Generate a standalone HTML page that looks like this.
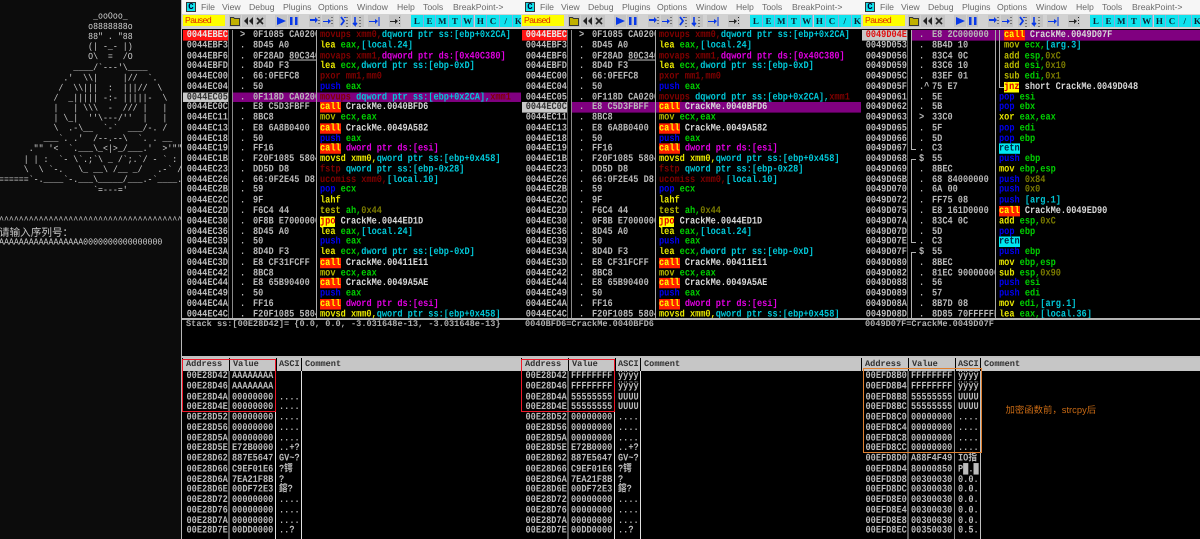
<!DOCTYPE html>
<html><head><meta charset="utf-8"><style>
html,body{margin:0;padding:0;background:#0c0c0c;width:1200px;height:539px;overflow:hidden;text-rendering:geometricPrecision}
*{box-sizing:border-box}
#con{position:absolute;left:0;top:0;width:181px;height:539px;background:#0c0c0c;overflow:hidden;color:#d0d0d0;font-family:"Liberation Mono",monospace;filter:blur(.2px)}
#con pre{position:absolute;left:-1px;margin:0;font:8.25px/9.107px "Liberation Mono",monospace;transform:scaleY(1.12);transform-origin:0 0;white-space:pre}
#cn{position:absolute;left:-1px;top:226px;font:10.6px/14px "Liberation Sans","Noto Sans CJK SC",sans-serif;color:#c8c8c8}
.pane{position:absolute;top:0;width:340px;height:539px;background:#000;overflow:hidden;font-family:"Liberation Mono",monospace;font-weight:bold;font-size:8.6px;filter:blur(.25px)}
.pane>div{position:absolute}
.menu{left:0;top:0;width:340px;height:14px;background:#f6f6f6}
.menu span{position:absolute;top:2px;font:normal 8.7px/11px "Liberation Sans",sans-serif;color:#6a6a6a}
.logo{left:4px;top:2px;width:10px;height:10px;background:#10e0e8;border:1px solid #333;color:#003;font:bold 9px/8px "Liberation Mono",monospace;text-align:center}
.tb{left:0;top:14px;width:340px;height:15px;background:#d2d2d2}
.pz{left:1px;top:15px;width:42px;height:11px;background:#ffff00;color:#e02000;font:normal 8.6px/11px "Liberation Sans",sans-serif;letter-spacing:-.5px;padding-left:2px}
.ltr{top:15px;width:12.7px;height:12px;background:#10e4ee;border-right:1px solid #8ad;color:#102030;font:bold 9px/12px "Liberation Serif",serif;text-align:center}
.ic{left:0;top:14px}
.rows{left:0;top:30px;width:340px;transform:scaleY(1.18);transform-origin:0 0}
.rows p{position:relative;margin:0;height:8.78px;line-height:8.78px;white-space:pre;color:#b8b8b8}
.rows b,.rows i,.rows u,.rows s{position:absolute;top:0;height:8.78px;font-style:normal;font-weight:bold;text-decoration:none;overflow:hidden}
.rows b{left:1px;width:45px;padding-left:3.7px;color:#bcbcbc}
.rows i{left:58px}
.rows u{left:71px;width:63px}
.rows s{left:138px;width:201px}
.rows u u{position:static;text-decoration:underline}
.pp{background:linear-gradient(90deg,transparent 51px,#800080 51px)}
.rd b{background:#ff1414;color:#e8e8e8}
.gr b{background:#c8c8c8;color:#303030}
.gr3 b{background:#c8c8c8;color:#e01010}
.in s{padding-left:5px}
.r{color:#800000}.c{color:#00c8d8}.m{color:#e000e0}.y{color:#e8e800}.g{color:#00d000}.l{color:#0000f0}.o{color:#7a7a00}.w{color:#d8d8d8}.t{color:#b8b800}
.ca,.jp,.rt{display:inline-block;height:8.78px;vertical-align:top}
.ca{background:#ff2000;color:#ffff00}.jp{background:#ffff00;color:#e00000}.rt{background:#00e8f0;color:#002040}
.vl{width:1px}
.hd{top:358px;height:13px;background:#c6c6c6;color:#303030;font:bold 8.6px/13px "Liberation Mono",monospace;padding-left:3px}
.dump{left:0;top:371px;width:340px;transform:scaleY(1.18);transform-origin:0 0}
.dump p{position:relative;margin:0;height:8.77px;line-height:8.77px;white-space:pre;color:#bcbcbc}
.dump b,.dump u,.dump s{position:absolute;top:0;font-weight:bold;text-decoration:none}
.dump b{left:4.5px}.dump u{left:50px}.dump s{left:97px;font-family:"Liberation Mono","Noto Sans CJK SC",monospace}
.info{top:319px;left:4px;width:330px;color:#b0b0b0;line-height:10px}
#note{position:absolute;left:1005.5px;top:403px;font:9.4px/14px "Liberation Sans","Noto Sans CJK SC",sans-serif;color:#c86a14;white-space:pre}
</style></head><body>
<svg width="0" height="0" style="position:absolute"><defs>
<symbol id="tools" viewBox="0 0 230 15">
<rect x="47" y="1" width="12" height="12" fill="#c0c0c0"/><path d="M48.500 3.500h3l1 1h5v7h-9z" fill="#c0b000" stroke="#333" stroke-width="1"/>
<rect x="60" y="1" width="12" height="12" fill="#c4c4c4"/><path d="M66 3v8l-4-4zM71 3v8l-4-4z" fill="#222"/>
<rect x="73" y="1" width="11" height="12" fill="#c4c4c4"/><path d="M75 4l6 6M81 4l-6 6" stroke="#222" stroke-width="1.6"/>
<rect x="93" y="1" width="12" height="12" fill="#c4c4c4"/><path d="M95 3l9 4-9 4z" fill="#0838e8"/>
<rect x="106" y="1" width="11" height="12" fill="#c4c4c4"/><path d="M108 3h2.500v8H108zM113 3h2.500v8H113z" fill="#0838e8"/>
<rect x="127" y="1" width="12" height="12" fill="#c4c4c4"/><path d="M128 5h5v-2l3 3-3 3V7h-5z" fill="#0838e8"/><path d="M137 3v1M137 6v1M137 9v1" stroke="#222"/>
<rect x="140" y="1" width="12" height="12" fill="#c4c4c4"/><path d="M141 7h5V5l3 2-3 3V8h-5z" fill="#0838e8"/><path d="M150 3v1M150 6v1M150 9v1" stroke="#222"/>
<rect x="157" y="1" width="12" height="12" fill="#c4c4c4"/><path d="M159 3l3 4-3 4M163 3v1" stroke="#0838e8" stroke-width="1.800" fill="none"/><path d="M165 3v1M165 6v1M165 9v1M165 12v1" stroke="#222"/>
<rect x="170" y="1" width="12" height="12" fill="#c4c4c4"/><path d="M173 3v8l-2-2M173 11l2-2" stroke="#0838e8" stroke-width="1.600" fill="none"/><path d="M178 3v1M178 6v1M178 9v1M178 12v1" stroke="#222"/>
<rect x="186" y="1" width="12" height="12" fill="#c4c4c4"/><path d="M187 7h6V5l3 2-3 3V8h-6z" fill="#0838e8"/><path d="M197 3v9" stroke="#0838e8"/>
<rect x="207" y="1" width="12" height="12" fill="#c4c4c4"/><path d="M208 7h5V5l3 2-3 3V8h-5z" fill="#222"/><path d="M217.500 3v1M217.500 6v1M217.500 9v1" stroke="#222"/>
</symbol></defs></svg>

<div id="con">
<pre style="top:12px">                   _ooOoo_
                  o8888888o
                  88" . "88
                  (| -_- |)
                  O\  =  /O
               ____/`---'\____
             .'  \\|     |//  `.
            /  \\|||  :  |||//  \
           /  _||||| -:- |||||-  \
           |   | \\\  -  /// |   |
           | \_|  ''\---/''  |   |
           \  .-\__  `-`  ___/-. /
         ___`. .'  /--.--\  `. . __
      ."" '&lt;  `.___\_&lt;|&gt;_/___.'  &gt;'"".
     | | :  `- \`.;`\ _ /`;.`/ - ` : | |
     \  \ `-.   \_ __\ /__ _/   .-` /  /
======`-.____`-.___\_____/___.-`____.-'======
                   `=---='


^^^^^^^^^^^^^^^^^^^^^^^^^^^^^^^^^^^^^^^^^^^^^^</pre>
<div id="cn">请输入序列号：</div>
<pre style="top:238px">AAAAAAAAAAAAAAAAA0000000000000000</pre>
</div>
<div style="position:absolute;left:181px;top:0;width:2px;height:539px;background:#b8b8b8"></div>

<!-- PANE 1 -->
<div class="pane" style="left:182px;width:339px">
<div class="rows">
<p class="rd"><b>0044EBEC</b><i>&gt;</i><u>0F1085 CA020000</u><s><span class=r>movups xmm0,</span><span class=c>dqword ptr ss:[ebp+0x2CA]</span></s></p>
<p><b>0044EBF3</b><i>.</i><u>8D45 A0</u><s><span class=y>lea</span> <span class=g>eax,</span><span class=c>[local.24]</span></s></p>
<p><b>0044EBF6</b><i>.</i><u>0F28AD <u>80C34000</u></u><s><span class=r>movaps xmm1,</span><span class=m>dqword ptr ds:[0x40C380]</span></s></p>
<p><b>0044EBFD</b><i>.</i><u>8D4D F3</u><s><span class=y>lea</span> <span class=g>ecx,</span><span class=c>dword ptr ss:[ebp-0xD]</span></s></p>
<p><b>0044EC00</b><i>.</i><u>66:0FEFC8</u><s><span class=r>pxor mm1,mm0</span></s></p>
<p><b>0044EC04</b><i>.</i><u>50</u><s><span class=l>push</span> <span class=g>eax</span></s></p>
<p class="gr pp"><b>0044EC05</b><i>.</i><u>0F118D CA020000</u><s><span class=r>movups</span> <span class=c>dqword ptr ss:[ebp+0x2CA],</span><span class=r>xmm1</span></s></p>
<p><b>0044EC0C</b><i>.</i><u>E8 C5D3FBFF</u><s><span class=ca>call</span> <span class=w>CrackMe.0040BFD6</span></s></p>
<p><b>0044EC11</b><i>.</i><u>8BC8</u><s><span class=t>mov</span> <span class=g>ecx,eax</span></s></p>
<p><b>0044EC13</b><i>.</i><u>E8 6A8B0400</u><s><span class=ca>call</span> <span class=w>CrackMe.0049A582</span></s></p>
<p><b>0044EC18</b><i>.</i><u>50</u><s><span class=l>push</span> <span class=g>eax</span></s></p>
<p><b>0044EC19</b><i>.</i><u>FF16</u><s><span class=ca>call</span> <span class=m>dword ptr ds:[esi]</span></s></p>
<p><b>0044EC1B</b><i>.</i><u>F20F1085 58040000</u><s><span class=y>movsd xmm0,</span><span class=c>qword ptr ss:[ebp+0x458]</span></s></p>
<p><b>0044EC23</b><i>.</i><u>DD5D D8</u><s><span class=r>fstp</span> <span class=c>qword ptr ss:[ebp-0x28]</span></s></p>
<p><b>0044EC26</b><i>.</i><u>66:0F2E45 D8</u><s><span class=r>ucomiss xmm0,</span><span class=c>[local.10]</span></s></p>
<p><b>0044EC2B</b><i>.</i><u>59</u><s><span class=l>pop</span> <span class=g>ecx</span></s></p>
<p><b>0044EC2C</b><i>.</i><u>9F</u><s><span class=y>lahf</span></s></p>
<p><b>0044EC2D</b><i>.</i><u>F6C4 44</u><s><span class=t>test</span> <span class=g>ah,</span><span class=o>0x44</span></s></p>
<p><b>0044EC30</b><i>.</i><u>0F8B E7000000</u><s><span class=jp>jpo</span> <span class=w>CrackMe.0044ED1D</span></s></p>
<p><b>0044EC36</b><i>.</i><u>8D45 A0</u><s><span class=y>lea</span> <span class=g>eax,</span><span class=c>[local.24]</span></s></p>
<p><b>0044EC39</b><i>.</i><u>50</u><s><span class=l>push</span> <span class=g>eax</span></s></p>
<p><b>0044EC3A</b><i>.</i><u>8D4D F3</u><s><span class=y>lea</span> <span class=g>ecx,</span><span class=c>dword ptr ss:[ebp-0xD]</span></s></p>
<p><b>0044EC3D</b><i>.</i><u>E8 CF31FCFF</u><s><span class=ca>call</span> <span class=w>CrackMe.00411E11</span></s></p>
<p><b>0044EC42</b><i>.</i><u>8BC8</u><s><span class=t>mov</span> <span class=g>ecx,eax</span></s></p>
<p><b>0044EC44</b><i>.</i><u>E8 65B90400</u><s><span class=ca>call</span> <span class=w>CrackMe.0049A5AE</span></s></p>
<p><b>0044EC49</b><i>.</i><u>50</u><s><span class=l>push</span> <span class=g>eax</span></s></p>
<p><b>0044EC4A</b><i>.</i><u>FF16</u><s><span class=ca>call</span> <span class=m>dword ptr ds:[esi]</span></s></p>
<p><b>0044EC4C</b><i>.</i><u>F20F1085 58040000</u><s><span class=y>movsd xmm0,</span><span class=c>qword ptr ss:[ebp+0x458]</span></s></p>
</div>
<div class="vl" style="left:46px;top:30px;height:288px;background:#5a5a5a"></div>
<div class="vl" style="left:50px;top:30px;height:288px;background:#8a8a8a"></div>
<div class="vl" style="left:134px;top:30px;height:288px;background:#a8a8a8"></div>
<div style="top:318px;left:0;width:339px;height:2px;background:#b4b4b4"></div>
<div class="info" style="top:319px">Stack ss:[00E28D42]= {0.0, 0.0, -3.031648e-13, -3.031648e-13}</div>
<div style="left:0;top:356px;width:339px;height:2px;background:#c0c0c0"></div>
<div class="hd" style="left:1px;width:46px">Address</div>
<div class="hd" style="left:48px;width:46px">Value</div>
<div class="hd" style="left:95px;width:24px;padding-left:2px">ASCI</div>
<div class="hd" style="left:120px;width:219px;padding-left:3px">Comment</div>
<div class="dump">
<p><b>00E28D42</b><u>AAAAAAAA</u></p>
<p><b>00E28D46</b><u>AAAAAAAA</u></p>
<p><b>00E28D4A</b><u>00000000</u><s>....</s></p>
<p><b>00E28D4E</b><u>00000000</u><s>....</s></p>
<p><b>00E28D52</b><u>00000000</u><s>....</s></p>
<p><b>00E28D56</b><u>00000000</u><s>....</s></p>
<p><b>00E28D5A</b><u>00000000</u><s>....</s></p>
<p><b>00E28D5E</b><u>E72B0000</u><s>..+?</s></p>
<p><b>00E28D62</b><u>887E5647</u><s>GV~?</s></p>
<p><b>00E28D66</b><u>C9EF01E6</u><s>?锷</s></p>
<p><b>00E28D6A</b><u>7EA21F8B</u><s>?</s></p>
<p><b>00E28D6E</b><u>00DF72E3</u><s>鎔?</s></p>
<p><b>00E28D72</b><u>00000000</u><s>....</s></p>
<p><b>00E28D76</b><u>00000000</u><s>....</s></p>
<p><b>00E28D7A</b><u>00000000</u><s>....</s></p>
<p><b>00E28D7E</b><u>00DD0000</u><s>..?</s></p>
</div>
<div style="left:46px;top:371px;width:2px;height:168px;background:#5a5a5a"></div>
<div class="vl" style="left:93px;top:371px;height:168px;background:#e0e0e0"></div>
<div class="vl" style="left:119px;top:371px;height:168px;background:#e0e0e0"></div>
<div style="left:0;top:359px;width:94px;height:53px;border:1px solid #f01828"></div>
<div class="menu"><div class="logo" style="position:absolute">C</div><span style="left:19px">File</span><span style="left:40px">View</span><span style="left:67px">Debug</span><span style="left:101px">Plugins</span><span style="left:136px">Options</span><span style="left:175px">Window</span><span style="left:215px">Help</span><span style="left:241px">Tools</span><span style="left:271px">BreakPoint-&gt;</span></div>
<div class="tb"></div><div class="pz">Paused</div>
<svg class="ic" width="230" height="15" style="position:absolute"><use href="#tools"/></svg>
<div class="ltr" style="left:229px">L</div><div class="ltr" style="left:241.700px">E</div><div class="ltr" style="left:254.400px">M</div><div class="ltr" style="left:267.100px">T</div><div class="ltr" style="left:279.800px">W</div><div class="ltr" style="left:292.500px">H</div><div class="ltr" style="left:305.200px">C</div><div class="ltr" style="left:317.900px">/</div><div class="ltr" style="left:330.600px">K</div>
</div>
<div style="position:absolute;left:521px;top:14px;width:1px;height:525px;background:#2f5f90"></div>

<!-- PANE 2 -->
<div class="pane" style="left:521px;width:340px">
<div class="rows">
<p class="rd"><b>0044EBEC</b><i>&gt;</i><u>0F1085 CA020000</u><s><span class=r>movups xmm0,</span><span class=c>dqword ptr ss:[ebp+0x2CA]</span></s></p>
<p><b>0044EBF3</b><i>.</i><u>8D45 A0</u><s><span class=y>lea</span> <span class=g>eax,</span><span class=c>[local.24]</span></s></p>
<p><b>0044EBF6</b><i>.</i><u>0F28AD <u>80C34000</u></u><s><span class=r>movaps xmm1,</span><span class=m>dqword ptr ds:[0x40C380]</span></s></p>
<p><b>0044EBFD</b><i>.</i><u>8D4D F3</u><s><span class=y>lea</span> <span class=g>ecx,</span><span class=c>dword ptr ss:[ebp-0xD]</span></s></p>
<p><b>0044EC00</b><i>.</i><u>66:0FEFC8</u><s><span class=r>pxor mm1,mm0</span></s></p>
<p><b>0044EC04</b><i>.</i><u>50</u><s><span class=l>push</span> <span class=g>eax</span></s></p>
<p><b>0044EC05</b><i>.</i><u>0F118D CA020000</u><s><span class=r>movups</span> <span class=c>dqword ptr ss:[ebp+0x2CA],</span><span class=r>xmm1</span></s></p>
<p class="gr pp"><b>0044EC0C</b><i>.</i><u>E8 C5D3FBFF</u><s><span class=ca>call</span> <span class=w>CrackMe.0040BFD6</span></s></p>
<p><b>0044EC11</b><i>.</i><u>8BC8</u><s><span class=t>mov</span> <span class=g>ecx,eax</span></s></p>
<p><b>0044EC13</b><i>.</i><u>E8 6A8B0400</u><s><span class=ca>call</span> <span class=w>CrackMe.0049A582</span></s></p>
<p><b>0044EC18</b><i>.</i><u>50</u><s><span class=l>push</span> <span class=g>eax</span></s></p>
<p><b>0044EC19</b><i>.</i><u>FF16</u><s><span class=ca>call</span> <span class=m>dword ptr ds:[esi]</span></s></p>
<p><b>0044EC1B</b><i>.</i><u>F20F1085 58040000</u><s><span class=y>movsd xmm0,</span><span class=c>qword ptr ss:[ebp+0x458]</span></s></p>
<p><b>0044EC23</b><i>.</i><u>DD5D D8</u><s><span class=r>fstp</span> <span class=c>qword ptr ss:[ebp-0x28]</span></s></p>
<p><b>0044EC26</b><i>.</i><u>66:0F2E45 D8</u><s><span class=r>ucomiss xmm0,</span><span class=c>[local.10]</span></s></p>
<p><b>0044EC2B</b><i>.</i><u>59</u><s><span class=l>pop</span> <span class=g>ecx</span></s></p>
<p><b>0044EC2C</b><i>.</i><u>9F</u><s><span class=y>lahf</span></s></p>
<p><b>0044EC2D</b><i>.</i><u>F6C4 44</u><s><span class=t>test</span> <span class=g>ah,</span><span class=o>0x44</span></s></p>
<p><b>0044EC30</b><i>.</i><u>0F8B E7000000</u><s><span class=jp>jpo</span> <span class=w>CrackMe.0044ED1D</span></s></p>
<p><b>0044EC36</b><i>.</i><u>8D45 A0</u><s><span class=y>lea</span> <span class=g>eax,</span><span class=c>[local.24]</span></s></p>
<p><b>0044EC39</b><i>.</i><u>50</u><s><span class=l>push</span> <span class=g>eax</span></s></p>
<p><b>0044EC3A</b><i>.</i><u>8D4D F3</u><s><span class=y>lea</span> <span class=g>ecx,</span><span class=c>dword ptr ss:[ebp-0xD]</span></s></p>
<p><b>0044EC3D</b><i>.</i><u>E8 CF31FCFF</u><s><span class=ca>call</span> <span class=w>CrackMe.00411E11</span></s></p>
<p><b>0044EC42</b><i>.</i><u>8BC8</u><s><span class=t>mov</span> <span class=g>ecx,eax</span></s></p>
<p><b>0044EC44</b><i>.</i><u>E8 65B90400</u><s><span class=ca>call</span> <span class=w>CrackMe.0049A5AE</span></s></p>
<p><b>0044EC49</b><i>.</i><u>50</u><s><span class=l>push</span> <span class=g>eax</span></s></p>
<p><b>0044EC4A</b><i>.</i><u>FF16</u><s><span class=ca>call</span> <span class=m>dword ptr ds:[esi]</span></s></p>
<p><b>0044EC4C</b><i>.</i><u>F20F1085 58040000</u><s><span class=y>movsd xmm0,</span><span class=c>qword ptr ss:[ebp+0x458]</span></s></p>
</div>
<div class="vl" style="left:46px;top:30px;height:288px;background:#5a5a5a"></div>
<div class="vl" style="left:50px;top:30px;height:288px;background:#8a8a8a"></div>
<div class="vl" style="left:134px;top:30px;height:288px;background:#a8a8a8"></div>
<div style="top:318px;left:0;width:340px;height:2px;background:#b4b4b4"></div>
<div class="info" style="top:319px">0040BFD6=CrackMe.0040BFD6</div>
<div style="left:0;top:356px;width:340px;height:2px;background:#c0c0c0"></div>
<div class="hd" style="left:1px;width:46px">Address</div>
<div class="hd" style="left:48px;width:46px">Value</div>
<div class="hd" style="left:95px;width:24px;padding-left:2px">ASCI</div>
<div class="hd" style="left:120px;width:220px;padding-left:3px">Comment</div>
<div class="dump">
<p><b>00E28D42</b><u>FFFFFFFF</u><s>ÿÿÿÿ</s></p>
<p><b>00E28D46</b><u>FFFFFFFF</u><s>ÿÿÿÿ</s></p>
<p><b>00E28D4A</b><u>55555555</u><s>UUUU</s></p>
<p><b>00E28D4E</b><u>55555555</u><s>UUUU</s></p>
<p><b>00E28D52</b><u>00000000</u><s>....</s></p>
<p><b>00E28D56</b><u>00000000</u><s>....</s></p>
<p><b>00E28D5A</b><u>00000000</u><s>....</s></p>
<p><b>00E28D5E</b><u>E72B0000</u><s>..+?</s></p>
<p><b>00E28D62</b><u>887E5647</u><s>GV~?</s></p>
<p><b>00E28D66</b><u>C9EF01E6</u><s>?锷</s></p>
<p><b>00E28D6A</b><u>7EA21F8B</u><s>?</s></p>
<p><b>00E28D6E</b><u>00DF72E3</u><s>鎔?</s></p>
<p><b>00E28D72</b><u>00000000</u><s>....</s></p>
<p><b>00E28D76</b><u>00000000</u><s>....</s></p>
<p><b>00E28D7A</b><u>00000000</u><s>....</s></p>
<p><b>00E28D7E</b><u>00DD0000</u><s>..?</s></p>
</div>
<div style="left:46px;top:371px;width:2px;height:168px;background:#5a5a5a"></div>
<div class="vl" style="left:93px;top:371px;height:168px;background:#e0e0e0"></div>
<div class="vl" style="left:119px;top:371px;height:168px;background:#e0e0e0"></div>
<div style="left:0;top:359px;width:94px;height:53px;border:1px solid #f01828"></div>
<div class="menu"><div class="logo" style="position:absolute">C</div><span style="left:19px">File</span><span style="left:40px">View</span><span style="left:67px">Debug</span><span style="left:101px">Plugins</span><span style="left:136px">Options</span><span style="left:175px">Window</span><span style="left:215px">Help</span><span style="left:241px">Tools</span><span style="left:271px">BreakPoint-&gt;</span></div>
<div class="tb"></div><div class="pz">Paused</div>
<svg class="ic" width="230" height="15" style="position:absolute"><use href="#tools"/></svg>
<div class="ltr" style="left:229px">L</div><div class="ltr" style="left:241.700px">E</div><div class="ltr" style="left:254.400px">M</div><div class="ltr" style="left:267.100px">T</div><div class="ltr" style="left:279.800px">W</div><div class="ltr" style="left:292.500px">H</div><div class="ltr" style="left:305.200px">C</div><div class="ltr" style="left:317.900px">/</div><div class="ltr" style="left:330.600px">K</div>
</div>
<div style="position:absolute;left:861px;top:14px;width:1px;height:525px;background:#2f5f90"></div>

<!-- PANE 3 -->
<div class="pane" style="left:861px;width:339px">
<div class="rows">
<p class="gr3 pp in"><b>0049D04E</b><i>.</i><u>E8 2C000000</u><s><span class=ca>call</span> <span class=w>CrackMe.0049D07F</span></s></p>
<p class="in"><b>0049D053</b><i>.</i><u>8B4D 10</u><s><span class=t>mov</span> <span class=g>ecx,</span><span class=c>[arg.3]</span></s></p>
<p class="in"><b>0049D056</b><i>.</i><u>83C4 0C</u><s><span class=t>add</span> <span class=g>esp,</span><span class=o>0xC</span></s></p>
<p class="in"><b>0049D059</b><i>.</i><u>83C6 10</u><s><span class=t>add</span> <span class=g>esi,</span><span class=o>0x10</span></s></p>
<p class="in"><b>0049D05C</b><i>.</i><u>83EF 01</u><s><span class=t>sub</span> <span class=g>edi,</span><span class=o>0x1</span></s></p>
<p class="in"><b>0049D05F</b><i>.^</i><u>75 E7</u><s><span class=jp>jnz</span> <span class=w>short CrackMe.0049D048</span></s></p>
<p><b>0049D061</b><i>.</i><u>5E</u><s><span class=l>pop</span> <span class=g>esi</span></s></p>
<p><b>0049D062</b><i>.</i><u>5B</u><s><span class=l>pop</span> <span class=g>ebx</span></s></p>
<p><b>0049D063</b><i>&gt;</i><u>33C0</u><s><span class=y>xor</span> <span class=g>eax,eax</span></s></p>
<p><b>0049D065</b><i>.</i><u>5F</u><s><span class=l>pop</span> <span class=g>edi</span></s></p>
<p><b>0049D066</b><i>.</i><u>5D</u><s><span class=l>pop</span> <span class=g>ebp</span></s></p>
<p><b>0049D067</b><i>.</i><u>C3</u><s><span class=rt>retn</span></s></p>
<p><b>0049D068</b><i>$</i><u>55</u><s><span class=l>push</span> <span class=g>ebp</span></s></p>
<p><b>0049D069</b><i>.</i><u>8BEC</u><s><span class=y>mov</span> <span class=g>ebp,esp</span></s></p>
<p><b>0049D06B</b><i>.</i><u>68 84000000</u><s><span class=l>push</span> <span class=o>0x84</span></s></p>
<p><b>0049D070</b><i>.</i><u>6A 00</u><s><span class=l>push</span> <span class=o>0x0</span></s></p>
<p><b>0049D072</b><i>.</i><u>FF75 08</u><s><span class=l>push</span> <span class=c>[arg.1]</span></s></p>
<p><b>0049D075</b><i>.</i><u>E8 161D0000</u><s><span class=ca>call</span> <span class=w>CrackMe.0049ED90</span></s></p>
<p><b>0049D07A</b><i>.</i><u>83C4 0C</u><s><span class=y>add</span> <span class=g>esp,</span><span class=o>0xC</span></s></p>
<p><b>0049D07D</b><i>.</i><u>5D</u><s><span class=l>pop</span> <span class=g>ebp</span></s></p>
<p><b>0049D07E</b><i>.</i><u>C3</u><s><span class=rt>retn</span></s></p>
<p><b>0049D07F</b><i>$</i><u>55</u><s><span class=l>push</span> <span class=g>ebp</span></s></p>
<p><b>0049D080</b><i>.</i><u>8BEC</u><s><span class=y>mov</span> <span class=g>ebp,esp</span></s></p>
<p><b>0049D082</b><i>.</i><u>81EC 90000000</u><s><span class=y>sub</span> <span class=g>esp,</span><span class=o>0x90</span></s></p>
<p><b>0049D088</b><i>.</i><u>56</u><s><span class=l>push</span> <span class=g>esi</span></s></p>
<p><b>0049D089</b><i>.</i><u>57</u><s><span class=l>push</span> <span class=g>edi</span></s></p>
<p><b>0049D08A</b><i>.</i><u>8B7D 08</u><s><span class=y>mov</span> <span class=g>edi,</span><span class=c>[arg.1]</span></s></p>
<p><b>0049D08D</b><i>.</i><u>8D85 70FFFFFF</u><s><span class=y>lea</span> <span class=g>eax,</span><span class=c>[local.36]</span></s></p>
</div>
<div class="vl" style="left:46px;top:30px;height:288px;background:#5a5a5a"></div>
<div class="vl" style="left:50px;top:30px;height:119px;background:#b0b0b0"></div>
<div style="left:50px;top:149px;width:5px;height:1px;background:#b0b0b0"></div>
<div class="vl" style="left:50px;top:159px;height:83px;background:#b0b0b0"></div>
<div style="left:50px;top:159px;width:5px;height:1px;background:#b0b0b0"></div>
<div style="left:50px;top:242px;width:5px;height:1px;background:#b0b0b0"></div>
<div class="vl" style="left:50px;top:252px;height:66px;background:#b0b0b0"></div>
<div style="left:50px;top:252px;width:5px;height:1px;background:#b0b0b0"></div>
<div class="vl" style="left:134px;top:30px;height:288px;background:#a8a8a8"></div>
<div class="vl" style="left:138px;top:30px;height:57px;background:#b0b0b0"></div>
<div style="left:138px;top:87px;width:5px;height:1px;background:#b0b0b0"></div>
<div style="top:318px;left:0;width:339px;height:2px;background:#b4b4b4"></div>
<div class="info" style="top:319px">0049D07F=CrackMe.0049D07F</div>
<div style="left:0;top:356px;width:339px;height:2px;background:#c0c0c0"></div>
<div class="hd" style="left:1px;width:46px">Address</div>
<div class="hd" style="left:48px;width:46px">Value</div>
<div class="hd" style="left:95px;width:24px;padding-left:2px">ASCI</div>
<div class="hd" style="left:120px;width:219px;padding-left:3px">Comment</div>
<div class="dump">
<p><b>00EFD8B0</b><u>FFFFFFFF</u><s>ÿÿÿÿ</s></p>
<p><b>00EFD8B4</b><u>FFFFFFFF</u><s>ÿÿÿÿ</s></p>
<p><b>00EFD8B8</b><u>55555555</u><s>UUUU</s></p>
<p><b>00EFD8BC</b><u>55555555</u><s>UUUU</s></p>
<p><b>00EFD8C0</b><u>00000000</u><s>....</s></p>
<p><b>00EFD8C4</b><u>00000000</u><s>....</s></p>
<p><b>00EFD8C8</b><u>00000000</u><s>....</s></p>
<p><b>00EFD8CC</b><u>00000000</u><s>....</s></p>
<p><b>00EFD8D0</b><u>A88F4F49</u><s>IO指</s></p>
<p><b>00EFD8D4</b><u>80000850</u><s>P█.█</s></p>
<p><b>00EFD8D8</b><u>00300030</u><s>0.0.</s></p>
<p><b>00EFD8DC</b><u>00300030</u><s>0.0.</s></p>
<p><b>00EFD8E0</b><u>00300030</u><s>0.0.</s></p>
<p><b>00EFD8E4</b><u>00300030</u><s>0.0.</s></p>
<p><b>00EFD8E8</b><u>00300030</u><s>0.0.</s></p>
<p><b>00EFD8EC</b><u>00350030</u><s>0.5.</s></p>
</div>
<div style="left:46px;top:371px;width:2px;height:168px;background:#5a5a5a"></div>
<div class="vl" style="left:93px;top:371px;height:168px;background:#8a8a8a"></div>
<div class="vl" style="left:119px;top:371px;height:168px;background:#c0c0c0"></div>
<div style="left:2px;top:368px;width:119px;height:85px;border:1px solid #e08030"></div>
<div class="menu"><div class="logo" style="position:absolute">C</div><span style="left:19px">File</span><span style="left:40px">View</span><span style="left:67px">Debug</span><span style="left:101px">Plugins</span><span style="left:136px">Options</span><span style="left:175px">Window</span><span style="left:215px">Help</span><span style="left:241px">Tools</span><span style="left:271px">BreakPoint-&gt;</span></div>
<div class="tb"></div><div class="pz" style="left:2px">Paused</div>
<svg class="ic" width="230" height="15" style="position:absolute"><use href="#tools"/></svg>
<div class="ltr" style="left:229px">L</div><div class="ltr" style="left:241.700px">E</div><div class="ltr" style="left:254.400px">M</div><div class="ltr" style="left:267.100px">T</div><div class="ltr" style="left:279.800px">W</div><div class="ltr" style="left:292.500px">H</div><div class="ltr" style="left:305.200px">C</div><div class="ltr" style="left:317.900px">/</div><div class="ltr" style="left:330.600px">K</div>
</div>
<div id="note">加密函数前，strcpy后</div>
</body></html>
